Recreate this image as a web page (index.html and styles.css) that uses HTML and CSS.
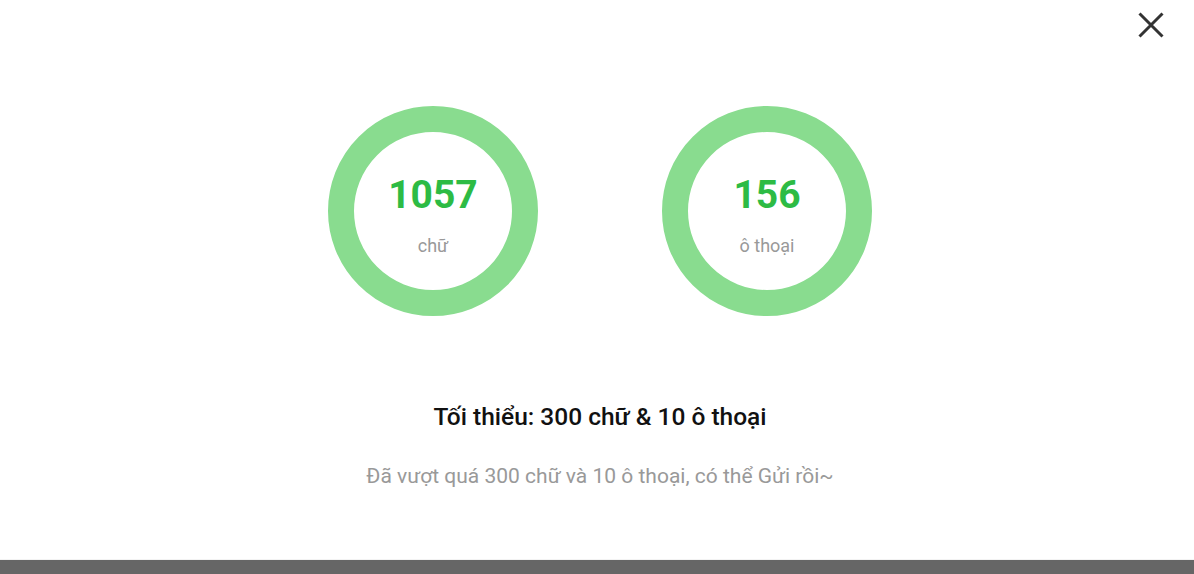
FILE: index.html
```html
<!doctype html>
<html>
<head>
<meta charset="utf-8">
<title>Thống kê</title>
<link rel="stylesheet" href="styles.css">
</head>
<body>
<div class="page">
	<div class="dialog">
		<a class="btn_close" href="#" title="Đóng">
			<svg width="26" height="26" viewBox="0 0 26 26"><path d="M1.5 1.5 L24.5 24.5 M24.5 1.5 L1.5 24.5" stroke="#333" stroke-width="3" fill="none"/></svg>
		</a>
		<div class="stats">
			<div class="ring">
				<strong>1057</strong>
				<span>chữ</span>
			</div>
			<div class="ring">
				<strong>156</strong>
				<span>ô thoại</span>
			</div>
		</div>
		<h2 class="limit">Tối thiểu: 300 chữ &amp; 10 ô thoại</h2>
		<p class="tip">Đã vượt quá 300 chữ và 10 ô thoại, có thể Gửi rồi~</p>
	</div>
	<div class="bottom_bar"></div>
</div>
</body>
</html>
```
FILE: styles.css
```css
*{ margin:0; padding:0; list-style:none; font-family: Roboto, "Noto Sans", "Liberation Sans", sans-serif;}
body{ background:#fff;}

.page{ display:flex; flex-direction:column; height:574px; overflow:hidden;}
.dialog{ position:relative; flex:1; display:flex; flex-direction:column; align-items:center; padding-left:6px; border-bottom:1px solid #f3f3f3;}

.btn_close{ position:absolute; right:30px; top:12px; display:block; width:26px; height:26px;}
.btn_close svg{ display:block;}

.stats{ display:flex; gap:124px; padding-top:106px;}
.ring{ width:210px; height:210px; box-sizing:border-box; border:26px solid #89dc8f; border-radius:50%;
	display:flex; flex-direction:column; align-items:center; justify-content:center;}
.ring strong{ font-size:39px; font-weight:700; color:#2dbb44; line-height:48px; margin-top:6px;}
.ring span{ font-size:18px; color:#999; line-height:22px; margin-top:16px;}

.limit{ margin-top:86px; font-size:24.5px; font-weight:500; color:#111; line-height:30px;}
.tip{ margin-top:31px; font-size:21px; color:#999; line-height:26px;}

.bottom_bar{ height:14px; background:#666;}
```
